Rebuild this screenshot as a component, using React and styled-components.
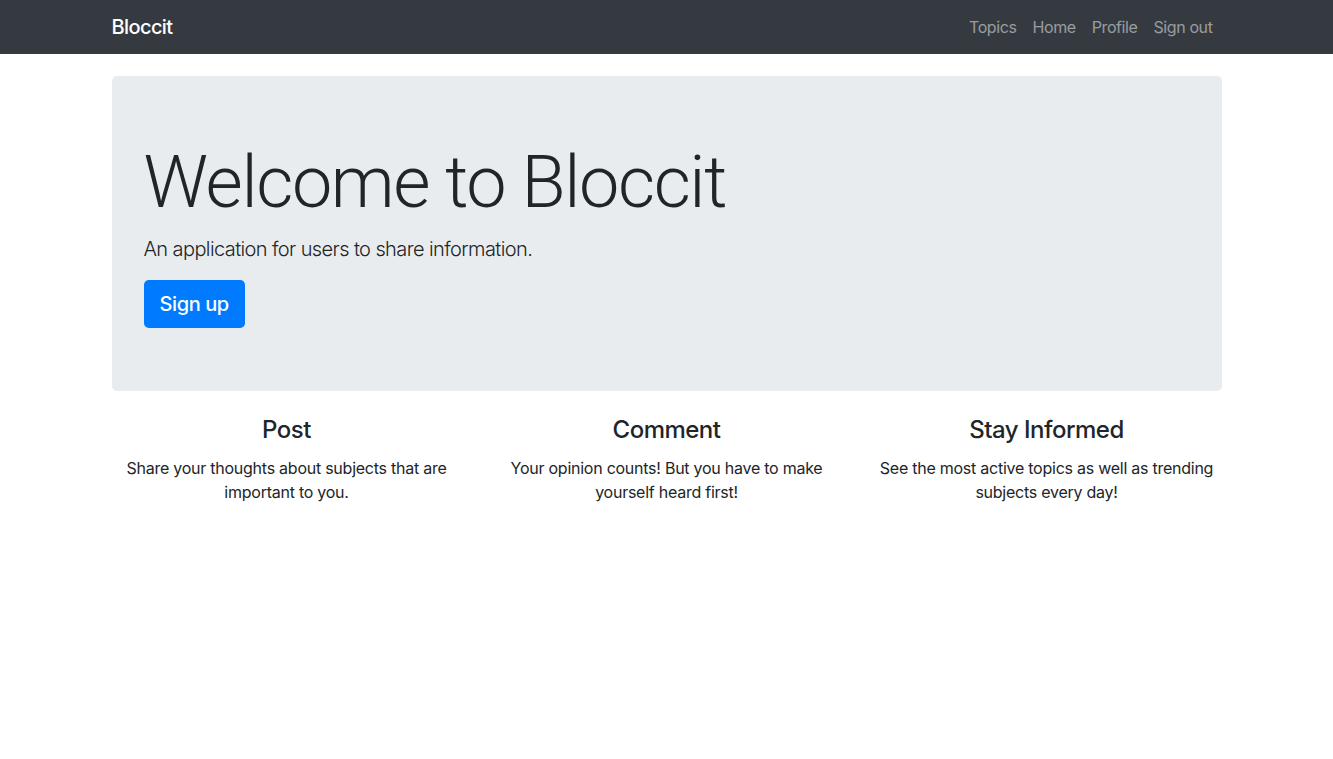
import React from "react";
import styled, { createGlobalStyle } from "styled-components";

const Global = createGlobalStyle`
  * { box-sizing: border-box; }
  body {
    margin: 0;
    font-family: Inter, "Noto Sans", "Liberation Sans", sans-serif;
    font-size: 16px;
    line-height: 1.5;
    color: #212529;
    background: #fff;
  }
`;

const Navbar = styled.nav`
  background: #343a40;
  height: 54px;
  display: flex;
  justify-content: center;
`;

const NavInner = styled.div`
  width: 1110px;
  display: flex;
  align-items: center;
  justify-content: space-between;
`;

const Brand = styled.a`
  color: #fff;
  font-size: 20px;
  font-weight: 500;
  letter-spacing: -0.6px;
  text-decoration: none;
  line-height: 30px;
`;

const NavLinks = styled.div`
  display: flex;
  margin-right: 1px;
`;

const NavLink = styled.a`
  color: rgba(255, 255, 255, 0.5);
  padding: 8px;
  font-size: 16px;
  letter-spacing: -0.4px;
  text-decoration: none;
  line-height: 24px;
`;

const Main = styled.main`
  width: 1110px;
  margin: 22px auto 0;
`;

const Jumbotron = styled.section`
  background: #e9ecef;
  border-radius: 4.8px;
  padding: 64px 32px;
  height: 315px;
`;

const Display = styled.h1`
  margin: 0 0 8px;
  font-family: Roboto, Inter, sans-serif;
  font-size: 72px;
  font-weight: 300;
  line-height: 86px;
  letter-spacing: -1.4px;
`;

const Lead = styled.p`
  margin: 0 0 16px;
  font-size: 20px;
  font-weight: 300;
  line-height: 30px;
  letter-spacing: -0.6px;
`;

const Button = styled.a`
  display: inline-block;
  background: #007bff;
  color: #fff;
  font-size: 20px;
  font-weight: 500;
  line-height: 30px;
  padding: 9px 16px;
  border-radius: 4.8px;
  letter-spacing: -0.4px;
  text-decoration: none;
`;

const Row = styled.div`
  display: grid;
  grid-template-columns: repeat(3, 1fr);
  margin: 24px -15px 0;
`;

const Col = styled.div`
  padding: 0 15px;
  text-align: center;
`;

const Heading = styled.h4`
  margin: 0 0 12px;
  font-size: 24px;
  font-weight: 500;
  line-height: 29px;
  letter-spacing: -0.5px;
`;

const Text = styled.p`
  margin: 0;
  font-size: 16px;
  line-height: 24px;
  letter-spacing: -0.25px;
`;

const features = [
  { title: "Post", text: "Share your thoughts about subjects that are important to you." },
  { title: "Comment", text: "Your opinion counts! But you have to make yourself heard first!" },
  { title: "Stay Informed", text: "See the most active topics as well as trending subjects every day!" },
];

export default function App() {
  return (
    <>
      <Global />
      <Navbar>
        <NavInner>
          <Brand href="#">Bloccit</Brand>
          <NavLinks>
            <NavLink href="#">Topics</NavLink>
            <NavLink href="#">Home</NavLink>
            <NavLink href="#">Profile</NavLink>
            <NavLink href="#">Sign out</NavLink>
          </NavLinks>
        </NavInner>
      </Navbar>
      <Main>
        <Jumbotron>
          <Display>Welcome to Bloccit</Display>
          <Lead>An application for users to share information.</Lead>
          <Button href="#">Sign up</Button>
        </Jumbotron>
        <Row>
          {features.map((f) => (
            <Col key={f.title}>
              <Heading>{f.title}</Heading>
              <Text>{f.text}</Text>
            </Col>
          ))}
        </Row>
      </Main>
    </>
  );
}
